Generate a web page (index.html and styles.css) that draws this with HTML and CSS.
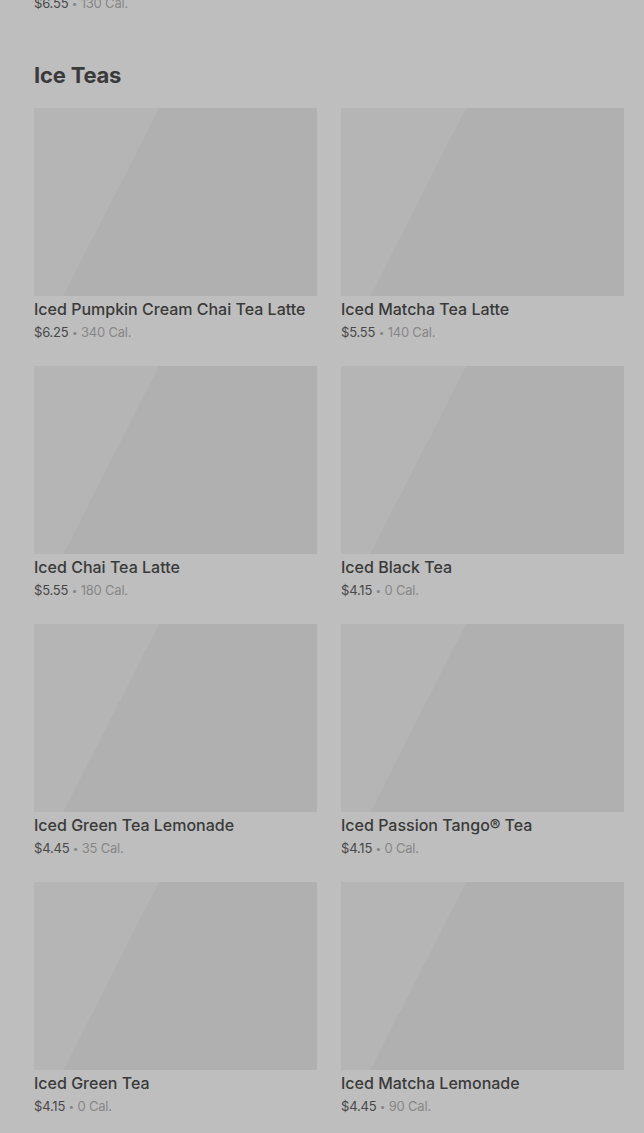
FILE: index.html
```html
<!DOCTYPE html>
<html lang="en">
<head>
    <meta charset="UTF-8">
    <meta name="viewport" content="width=device-width, initial-scale=1.0">
    <title>Menu - Ice Teas</title>
    <link rel="stylesheet" href="styles.css">
</head>
<body>

    <div class="menu">

        <!-- tail of the previous category -->
        <p class="info prev-tail"><span class="price">$6.55</span> <span class="dot">•</span> 130 Cal.</p>

        <!-- Ice Teas -->
        <section class="category">
            <h2>Ice Teas</h2>

            <div class="grid">
                <div class="card">
                    <div class="thumb"></div>
                    <h3>Iced Pumpkin Cream Chai Tea Latte</h3>
                    <p class="info"><span class="price">$6.25</span> <span class="dot">•</span> 340 Cal.</p>
                </div>
                <div class="card">
                    <div class="thumb"></div>
                    <h3>Iced Matcha Tea Latte</h3>
                    <p class="info"><span class="price">$5.55</span> <span class="dot">•</span> 140 Cal.</p>
                </div>
                <div class="card">
                    <div class="thumb"></div>
                    <h3>Iced Chai Tea Latte</h3>
                    <p class="info"><span class="price">$5.55</span> <span class="dot">•</span> 180 Cal.</p>
                </div>
                <div class="card">
                    <div class="thumb"></div>
                    <h3>Iced Black Tea</h3>
                    <p class="info"><span class="price">$4.15</span> <span class="dot">•</span> 0 Cal.</p>
                </div>
                <div class="card">
                    <div class="thumb"></div>
                    <h3>Iced Green Tea Lemonade</h3>
                    <p class="info"><span class="price">$4.45</span> <span class="dot">•</span> 35 Cal.</p>
                </div>
                <div class="card">
                    <div class="thumb"></div>
                    <h3>Iced Passion Tango® Tea</h3>
                    <p class="info"><span class="price">$4.15</span> <span class="dot">•</span> 0 Cal.</p>
                </div>
                <div class="card">
                    <div class="thumb"></div>
                    <h3>Iced Green Tea</h3>
                    <p class="info"><span class="price">$4.15</span> <span class="dot">•</span> 0 Cal.</p>
                </div>
                <div class="card">
                    <div class="thumb"></div>
                    <h3>Iced Matcha Lemonade</h3>
                    <p class="info"><span class="price">$4.45</span> <span class="dot">•</span> 90 Cal.</p>
                </div>
            </div>
        </section>

    </div>

</body>
</html>
```

FILE: styles.css
```css
* {
    margin: 0;
    padding: 0;
    box-sizing: border-box;
}

body {
    font-family: Inter, "Liberation Sans", sans-serif;
    background-color: #bebebe;
    color: #3a3a3a;
}

.menu {
    padding: 0 20px 0 34px;
}

/* price + calories line */
.info {
    font-size: 13px;
    line-height: 18px;
    color: #878787;
    letter-spacing: -0.2px;
}

.info .price {
    color: #484848;
}

.info .dot {
    font-size: 10px;
    line-height: 0;
    vertical-align: 1px;
}

.prev-tail {
    margin-top: -6px;
}

/* Category */
.category h2 {
    font-size: 22px;
    line-height: 28px;
    font-weight: 700;
    color: #3a3a3a;
    margin-top: 49px;
    margin-bottom: 19px;
    letter-spacing: -0.2px;
}

.grid {
    display: grid;
    grid-template-columns: 1fr 1fr;
    column-gap: 24px;
    row-gap: 25px;
}

.thumb {
    height: 188px;
    background: linear-gradient(117deg, #b5b5b5 0%, #b5b5b5 33%, #b0b0b0 33%, #b0b0b0 100%);
}

.card h3 {
    font-size: 16px;
    line-height: 20px;
    font-weight: 500;
    color: #3a3a3a;
    margin-top: 3px;
    margin-bottom: 4px;
}
```
